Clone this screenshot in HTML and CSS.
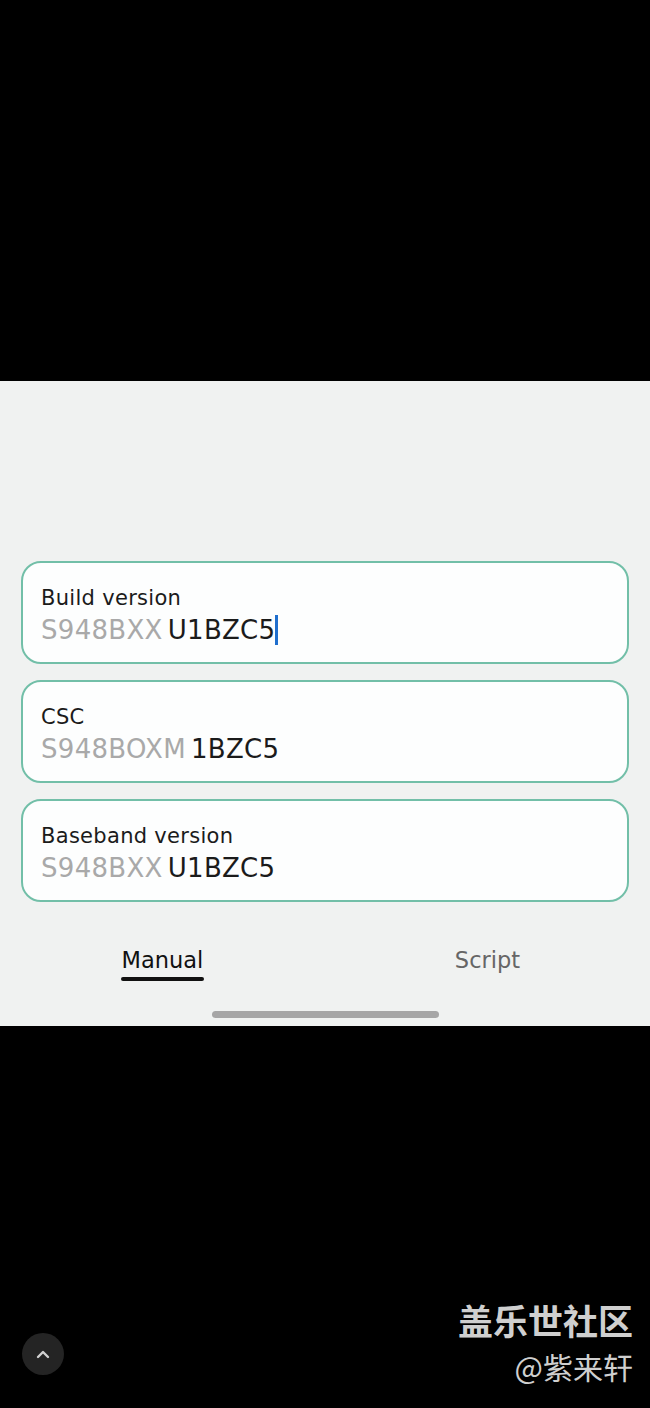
FILE: index.html
```html
<!DOCTYPE html>
<html>
<head>
<meta charset="utf-8">
<link rel="stylesheet" href="styles.css">
</head>
<body>
<div class="screen">
  <div class="top-black"></div>
  <div class="panel">
    <div class="cards">
      <div class="card">
        <div class="label">Build version</div>
        <div class="value"><span class="prefix">S948BXX</span><span class="suffix">U1BZC5</span><span class="caret"></span></div>
      </div>
      <div class="card">
        <div class="label">CSC</div>
        <div class="value"><span class="prefix">S948BOXM</span><span class="suffix">1BZC5</span></div>
      </div>
      <div class="card">
        <div class="label">Baseband version</div>
        <div class="value"><span class="prefix">S948BXX</span><span class="suffix">U1BZC5</span></div>
      </div>
    </div>
    <div class="tabs">
      <div class="tab active">Manual</div>
      <div class="tab">Script</div>
    </div>
    <div class="home-bar"></div>
  </div>
  <div class="bottom-black">
    <div class="up-btn">
      <svg width="16" height="10" viewBox="0 0 16 10"><path d="M3 8 L8 3 L13 8" fill="none" stroke="#d0d0d0" stroke-width="2.4" stroke-linecap="round" stroke-linejoin="round"/></svg>
    </div>
    <div class="watermark">
      <div class="wm-title">盖乐世社区</div>
      <div class="wm-user">@紫来轩</div>
    </div>
  </div>
</div>
</body>
</html>
```
FILE: styles.css
```css
html, body {
  margin: 0;
  padding: 0;
  background: #000;
}
.screen {
  width: 650px;
  height: 1408px;
  display: flex;
  flex-direction: column;
  font-family: "DejaVu Sans", "Noto Sans", sans-serif;
}
.top-black {
  height: 381px;
  background: #000;
  flex: none;
}
.panel {
  height: 645px;
  flex: none;
  background: #f0f2f1;
  box-sizing: border-box;
  padding-top: 180px;
  display: flex;
  flex-direction: column;
}
.cards {
  display: flex;
  flex-direction: column;
  gap: 16px;
  padding: 0 21px;
}
.card {
  height: 103px;
  box-sizing: border-box;
  border: 2px solid #72bfa8;
  border-radius: 20px;
  background: #fdfefe;
  padding: 22px 0 0 18px;
}
.label {
  font-size: 21px;
  line-height: 26px;
  letter-spacing: 0.3px;
  color: #1b1b1b;
}
.value {
  display: flex;
  align-items: center;
  font-size: 26px;
  line-height: 34px;
  letter-spacing: 0.3px;
  margin-top: 2px;
}
.prefix {
  color: #a9a9a9;
  margin-right: 5px;
}
.suffix {
  color: #1b1b1b;
}
.caret {
  width: 3px;
  height: 30px;
  background: #1f6fce;
  margin-left: 0;
}
.tabs {
  display: flex;
  margin-top: 44px;
}
.tab {
  width: 50%;
  display: flex;
  flex-direction: column;
  align-items: center;
  font-size: 22.5px;
  line-height: 28px;
  color: #666;
}
.tab.active {
  color: #111;
}
.tab.active::after {
  content: "";
  display: block;
  width: 83px;
  height: 4px;
  border-radius: 2px;
  background: #111;
  margin-top: 3px;
}
.home-bar {
  align-self: center;
  width: 227px;
  height: 7px;
  border-radius: 4px;
  background: #a6a6a6;
  margin-top: 30px;
}
.bottom-black {
  flex: 1;
  background: #000;
  display: flex;
  align-items: flex-end;
  justify-content: space-between;
  padding: 0 17px 21px 22px;
}
.up-btn {
  width: 42px;
  height: 42px;
  border-radius: 50%;
  background: #242424;
  display: flex;
  align-items: center;
  justify-content: center;
  margin-bottom: 12px;
}
.watermark {
  display: flex;
  flex-direction: column;
  align-items: flex-end;
  font-family: "Noto Sans CJK SC", sans-serif;
  color: #cfcfcf;
}
.wm-title {
  font-size: 35px;
  font-weight: 700;
  line-height: 51px;
}
.wm-user {
  font-size: 30px;
  line-height: 42px;
}
```
